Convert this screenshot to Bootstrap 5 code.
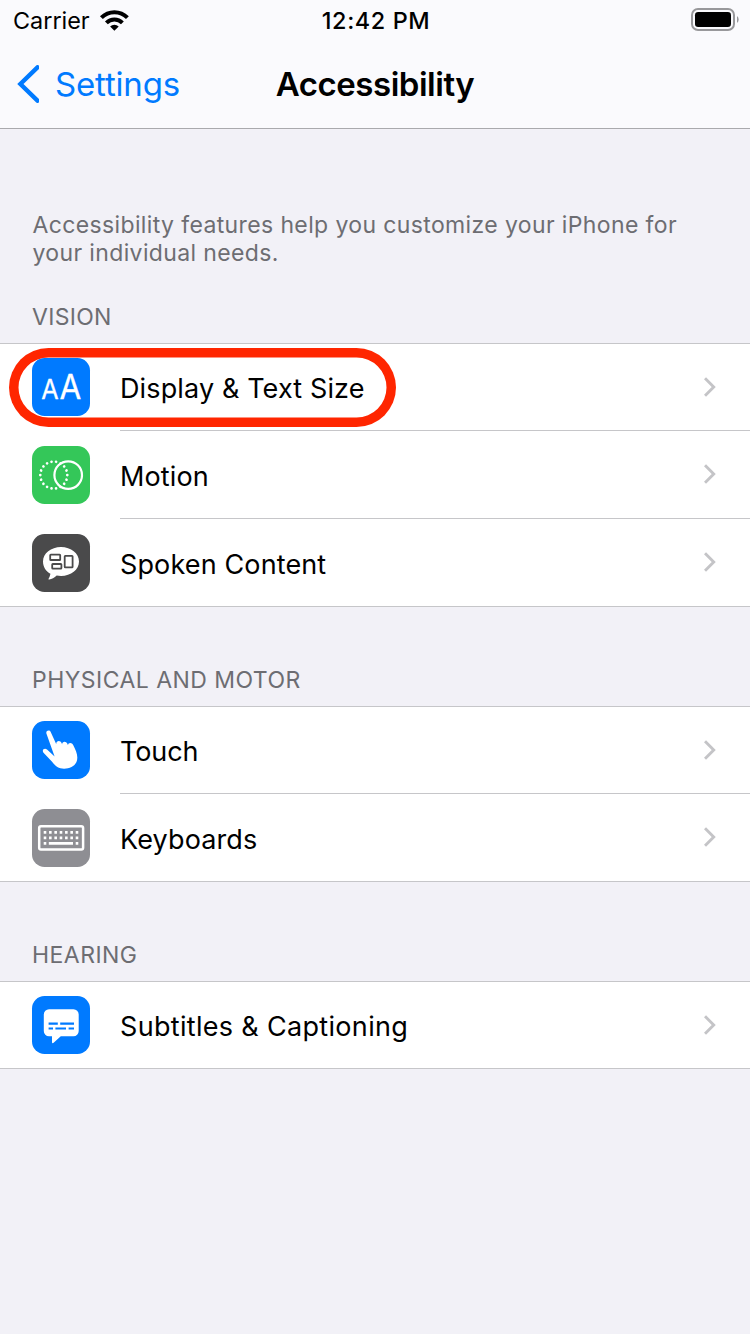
<!DOCTYPE html>
<html lang="en">
<head>
<meta charset="utf-8">
<meta name="viewport" content="width=device-width, initial-scale=1">
<title>Accessibility</title>
<link href="https://cdn.jsdelivr.net/npm/bootstrap@5.3.0/dist/css/bootstrap.min.css" rel="stylesheet">
<style>
body{background:#f2f1f7;font-family:Inter,"Liberation Sans",sans-serif;color:#000;min-height:1334px}
svg{display:block;flex:none}
.top-area{height:129px;background:#fafafd;border-bottom:1px solid #a9a9ad}
.status-bar{height:40px;padding:0 11px 0 13px;font-size:23.4px;line-height:41px}
.side{flex:1 1 0}
.time-text{font-weight:550;letter-spacing:.6px}
.title-bar{height:88px;padding-left:17px;padding-right:17px;font-size:33px}
.back-link,.back-link:hover{color:#007aff;letter-spacing:-.17px;line-height:40px}
.back-link svg{margin-right:16px}
.page-title{font-size:33px;line-height:88px;font-weight:600;letter-spacing:-.46px}
.intro{font-size:23px;line-height:28px;letter-spacing:.375px;color:#6d6d72;padding:82px 32px 0 32.4px}
.section-label{font-size:23px;line-height:28px;letter-spacing:.46px;font-weight:400;color:#6d6d72;padding:59px 32px 12px}
.section-label.after-intro{padding-top:36px;letter-spacing:.3px}
.settings-group{border-top:1px solid #c6c6c9;border-bottom:1px solid #c6c6c9;background:#fff}
.setting-row{padding:1px 0 0 32px;height:88px}
.setting-row:first-child{padding-top:0;height:86px}
.row-body{font-size:27px;letter-spacing:.13px;height:88px;margin-top:-1px;padding-right:34px;border-top:1px solid #c6c6c9}
.setting-row:first-child .row-body{height:86px;margin-top:0;border-top:0}
.row-body span{padding-top:5px}
.setting-row:first-child .row-body span{padding-top:4px}
.row-body .wide{letter-spacing:.32px}
.row-body .tight{letter-spacing:-.1px}
.row-body svg{margin-bottom:1px}
.tile{width:58px;height:58px;margin-right:30px;border-radius:12.5px}
.tile-blue{background:#007aff}
.tile-green{background:#34c759}
.tile-dark{background:#4a4a4b}
.tile-gray{background:#8e8e93}
.highlight{left:9.3px;top:3.7px;width:387px;height:79.4px;border-radius:40px;box-shadow:inset 0 0 0 9.5px #ff2600;pointer-events:none}
</style>
</head>
<body>
<svg width="0" height="0" class="position-absolute" aria-hidden="true">
  <symbol id="chevron" viewBox="0 0 12 20"><path d="M1 1.300 9.700 10 1 18.700" fill="none" stroke="#c4c4c7" stroke-width="2.900"/></symbol>
</svg>

<header class="top-area">
  <div class="status-bar d-flex align-items-center">
    <div class="side d-flex align-items-center">
      <span>Carrier</span>
      <svg class="ms-2" width="32" height="24" viewBox="0 0 32 24" aria-label="Wi-Fi">
        <g fill="none" stroke="#000" stroke-width="4">
          <path d="M3.400 9.700a18.200 18.200 0 0 1 26 0"/>
          <path d="M8.400 14.900a11.300 11.300 0 0 1 16 0"/>
        </g>
        <path d="M12.100 18.500a6.200 6.200 0 0 1 8.600 0L16.400 22.700Z"/>
      </svg>
    </div>
    <div class="time-text">12:42 PM</div>
    <div class="side d-flex justify-content-end">
      <svg width="48" height="24" viewBox="0 0 48 24" aria-label="Battery">
        <rect x="1" y="1" width="42" height="21" rx="6" fill="none" stroke="#98989b" stroke-width="2"/>
        <rect x="4" y="4" width="36" height="15" rx="3.200"/>
        <path d="M46 8a4.500 4.500 0 0 1 0 7Z" fill="#98989b"/>
      </svg>
    </div>
  </div>
  <nav class="title-bar d-flex align-items-center">
    <div class="side d-flex align-items-center">
      <a href="#" class="back-link d-flex align-items-center text-decoration-none">
        <svg width="22" height="38" viewBox="0 0 22 38"><path d="M20.500 2.300 3.400 19 20.500 35.700" fill="none" stroke="#007aff" stroke-width="4.400" stroke-linecap="round" stroke-linejoin="miter"/></svg>
        <span>Settings</span>
      </a>
    </div>
    <h1 class="page-title m-0">Accessibility</h1>
    <div class="side"></div>
  </nav>
</header>

<main>
  <p class="intro m-0">Accessibility features help you customize your iPhone for your individual needs.</p>

  <h2 class="section-label after-intro m-0">VISION</h2>
  <section class="settings-group">
    <div class="setting-row position-relative d-flex align-items-center">
      <svg class="tile tile-blue" viewBox="0 0 58 58" fill="#fff" stroke="#fff" stroke-width=".3">
        <text x="9.200" y="41" font-size="26.500" textLength="17.400" lengthAdjust="spacingAndGlyphs">A</text>
        <text x="27.600" y="41" font-size="33.500" textLength="21.800" lengthAdjust="spacingAndGlyphs">A</text>
      </svg>
      <div class="row-body flex-grow-1 d-flex align-items-center justify-content-between">
        <span>Display &amp; Text Size</span><svg width="12" height="20"><use href="#chevron"/></svg>
      </div>
      <div class="highlight position-absolute"></div>
    </div>
    <div class="setting-row d-flex align-items-center">
      <svg class="tile tile-green" viewBox="0 0 58 58" fill="none" stroke="#fff">
        <circle cx="36.200" cy="29.100" r="13.800" stroke-width="2.200"/>
        <circle cx="21.800" cy="29.100" r="13.500" pathLength="180" stroke-width="2.700" stroke-linecap="round" stroke-dasharray="0.01 9.99"/>
      </svg>
      <div class="row-body flex-grow-1 d-flex align-items-center justify-content-between">
        <span>Motion</span><svg width="12" height="20"><use href="#chevron"/></svg>
      </div>
    </div>
    <div class="setting-row d-flex align-items-center">
      <svg class="tile tile-dark" viewBox="0 0 58 58">
        <path d="M29 13c10 0 18 6.400 18 14.500S39 42 29 42c-1.500 0-3-.1-4.300-.4-2.300 2-5 3.700-7.500 4-.8 0-.9-.6-.5-1.200.8-1.200 1.500-2.700 1.700-4.600C13.800 37.300 11 32.900 11 27.500 11 19.400 19 13 29 13Z" fill="#fff"/>
        <g fill="none" stroke="#4a4a4b" stroke-width="1.800">
          <rect x="18.200" y="20.600" width="10" height="5.400" rx=".6"/>
          <rect x="20.200" y="30" width="9.200" height="4.700" rx=".6"/>
          <rect x="32.700" y="21.800" width="7.900" height="11.600" rx=".6"/>
        </g>
      </svg>
      <div class="row-body flex-grow-1 d-flex align-items-center justify-content-between">
        <span>Spoken Content</span><svg width="12" height="20"><use href="#chevron"/></svg>
      </div>
    </div>
  </section>

  <h2 class="section-label m-0">PHYSICAL AND MOTOR</h2>
  <section class="settings-group">
    <div class="setting-row d-flex align-items-center">
      <svg class="tile tile-blue" viewBox="0 0 58 58">
        <path d="M14.400 12.500c-.8-2.600 3-4.200 4.300-1.500l5.600 12.300c-.6-3.600 4-4.800 5.300-1.200l.5 1.400c-.3-3.200 4-4 5.300-.7l.6 1.500c0-2.700 3.900-3.100 5.300-.1 2.200 4.400 4 8.400 4 12.100.3 7.400-6.200 11.400-13.200 11.400-5.200 0-8.800-2.300-11.800-6.600L11.300 31.400c-1.700-2.600 1.300-5 3.700-2.900l7.600 7Z" fill="#fff"/>
      </svg>
      <div class="row-body flex-grow-1 d-flex align-items-center justify-content-between">
        <span class="tight">Touch</span><svg width="12" height="20"><use href="#chevron"/></svg>
      </div>
    </div>
    <div class="setting-row d-flex align-items-center">
      <svg class="tile tile-gray" viewBox="0 0 58 58" fill="none" stroke="#fff">
        <rect x="7.200" y="17.200" width="43.900" height="23.400" rx="1.800" stroke-width="2.500"/>
        <path d="M11.700 23.400H47M11.700 28.900H47" stroke-width="2.600" stroke-dasharray="2.600 2.733"/>
        <path d="M11.700 34.400h2.600M16.800 34.400h24.200M43.700 34.400h2.600" stroke-width="2.600"/>
      </svg>
      <div class="row-body flex-grow-1 d-flex align-items-center justify-content-between">
        <span>Keyboards</span><svg width="12" height="20"><use href="#chevron"/></svg>
      </div>
    </div>
  </section>

  <h2 class="section-label m-0">HEARING</h2>
  <section class="settings-group">
    <div class="setting-row d-flex align-items-center">
      <svg class="tile tile-blue" viewBox="0 0 58 58">
        <path d="M17 13.200h24.500a5.200 5.200 0 0 1 5.200 5.200V35a5.200 5.200 0 0 1-5.200 5.200H28.800l-7.200 6.600c-.8.700-1.600.4-1.600-.6v-6h-3a5.200 5.200 0 0 1-5.200-5.200V18.400a5.200 5.200 0 0 1 5.200-5.200Z" fill="#fff"/>
        <path d="M16.600 27.600h9.200M28.200 27.600H42M16.600 32.500H21M23.400 32.500H34M36.600 32.500H42" stroke="#007aff" stroke-width="2.200"/>
      </svg>
      <div class="row-body flex-grow-1 d-flex align-items-center justify-content-between">
        <span class="wide">Subtitles &amp; Captioning</span><svg width="12" height="20"><use href="#chevron"/></svg>
      </div>
    </div>
  </section>
</main>
<script src="https://cdn.jsdelivr.net/npm/bootstrap@5.3.0/dist/js/bootstrap.bundle.min.js"></script>
</body>
</html>
